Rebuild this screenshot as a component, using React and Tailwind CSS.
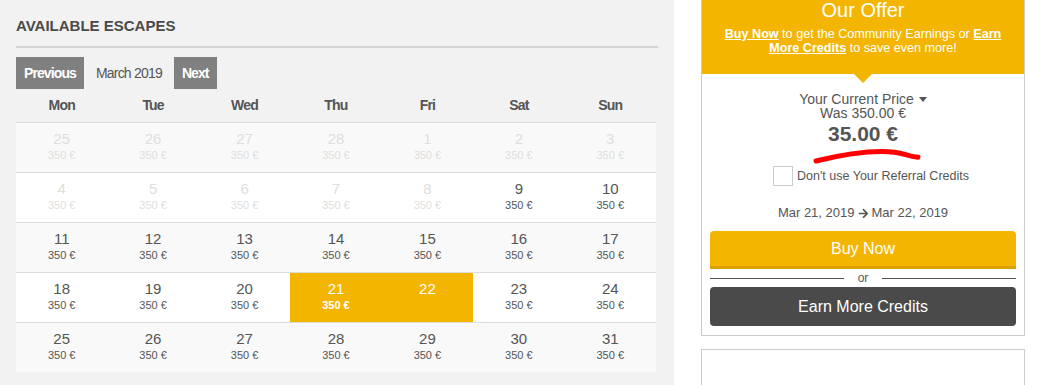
import { FaArrowRight } from 'react-icons/fa';

const weeks = [
  [[25, 'off'], [26, 'off'], [27, 'off'], [28, 'off'], [1, 'off'], [2, 'off'], [3, 'off']],
  [[4, 'off'], [5, 'off'], [6, 'off'], [7, 'off'], [8, 'off'], [9, 'on'], [10, 'on']],
  [[11, 'on'], [12, 'on'], [13, 'on'], [14, 'on'], [15, 'on'], [16, 'on'], [17, 'on']],
  [[18, 'on'], [19, 'on'], [20, 'on'], [21, 'sel'], [22, 'end'], [23, 'on'], [24, 'on']],
  [[25, 'on'], [26, 'on'], [27, 'on'], [28, 'on'], [29, 'on'], [30, 'on'], [31, 'on']],
];

const dayNames = ['Mon', 'Tue', 'Wed', 'Thu', 'Fri', 'Sat', 'Sun'];

function DayCell({ day, state }) {
  const selected = state === 'sel' || state === 'end';
  const color = state === 'off' ? 'text-[#dedede]' : selected ? 'text-white' : 'text-[#555]';
  return (
    <div className={`flex-1 text-center pt-[7px] pb-[10px] ${color} ${selected ? 'bg-[#f3b500]' : ''}`}>
      <div className="text-[15px] leading-[18px]">{day}</div>
      <div className={`text-[11px] leading-[14px] h-[14px] ${state === 'sel' ? 'font-bold' : ''}`}>
        {state === 'end' ? '' : '350 €'}
      </div>
    </div>
  );
}

function Calendar() {
  return (
    <div className="w-[674px] shrink-0 bg-[#f2f2f2] px-4 h-[385px]">
      <h2 className="pt-[17px] text-[15px] leading-[18px] font-bold uppercase text-[#4a4a4a]">
        Available Escapes
      </h2>
      <div className="mt-[11px] h-[2px] bg-[#d4d4d4]" />

      {/* month switcher */}
      <div className="mt-[9px] flex items-center">
        <button className="h-8 px-2 bg-[#808080] text-white font-bold text-[14px] tracking-[-0.9px]">
          Previous
        </button>
        <span className="mx-3 text-[14px] text-[#555] tracking-[-0.8px]">March 2019</span>
        <button className="h-8 px-2 bg-[#808080] text-white font-bold text-[14px] tracking-[-0.9px]">
          Next
        </button>
      </div>

      <div className="w-[640px]">
        <div className="flex pt-[6px] pb-[7px]">
          {dayNames.map((d) => (
            <div
              key={d}
              className="flex-1 text-center font-bold text-[14px] leading-5 text-[#555] tracking-[-0.8px]"
            >
              {d}
            </div>
          ))}
        </div>
        {weeks.map((week, i) => (
          <div
            key={i}
            className={`flex border-t border-[#dddddd] ${i % 2 === 0 ? 'bg-[#f9f9f9]' : 'bg-white'}`}
          >
            {week.map(([day, state]) => (
              <DayCell key={`${i}-${day}`} day={day} state={state} />
            ))}
          </div>
        ))}
      </div>
    </div>
  );
}

function OfferCard() {
  return (
    <div className="w-[324px] border-x border-b border-[#cccccc]">
      <div className="relative h-[74px] bg-[#f3b500] text-white text-center px-5">
        <div className="text-[20px] leading-[20px]">Our Offer</div>
        <p className="mt-2 text-[12.6px] leading-[13.5px]">
          <span className="font-bold underline">Buy Now</span> to get the Community Earnings or{' '}
          <span className="font-bold underline">Earn More Credits</span> to save even more!
        </p>
        <div className="absolute left-1/2 -translate-x-1/2 top-full w-0 h-0 border-x-[9px] border-x-transparent border-t-[9px] border-t-[#f3b500]" />
      </div>

      <div className="px-2 pb-[9px] text-[#555]">
        <div className="pt-[18px] text-center text-[14px] leading-[14px]">
          <div className="flex items-center justify-center">
            Your Current Price
            <span className="ml-[5px] inline-block w-0 h-0 border-x-[4px] border-x-transparent border-t-[5px] border-t-[#555]" />
          </div>
          <div>Was 350.00 €</div>
          <div className="mt-[2px] text-[21px] leading-[24px] font-bold">35.00 €</div>
        </div>

        <svg width="116" height="18" viewBox="0 0 116 18" className="block ml-[100px] mt-[1px]">
          <path
            d="M6 14 C 24 9.5, 50 4.5, 72 4.5 S 94 9, 108 10.3"
            fill="none"
            stroke="#ff0000"
            strokeWidth="5"
            strokeLinecap="round"
          />
        </svg>

        <div className="mt-[1px] pl-4 flex items-center justify-center gap-1">
          <span className="w-5 h-5 border border-[#cccccc] bg-white" />
          <span className="text-[12.5px]">Don't use Your Referral Credits</span>
        </div>

        <div className="mt-[19px] flex items-center justify-center text-[13px] leading-4">
          Mar 21, 2019
          <FaArrowRight className="mx-[3px] text-[#555]" size={11} />
          Mar 22, 2019
        </div>

        <button className="mt-[10px] w-full h-[38px] bg-[#f3b500] border-b-[3px] border-[#d9a000] rounded-t-sm text-white text-[16px]">
          Buy Now
        </button>

        <div className="flex items-center h-[18px] text-[12px] text-[#555]">
          <div className="flex-1 h-px bg-[#555]" />
          <span className="px-[14px] leading-none">or</span>
          <div className="flex-1 h-px bg-[#555]" />
        </div>

        <button className="w-full h-[39px] bg-[#4a4a4a] rounded-sm text-white text-[16px]">
          Earn More Credits
        </button>
      </div>
    </div>
  );
}

export default function App() {
  return (
    <div className="flex w-[1054px] h-[385px] overflow-hidden bg-white font-['Liberation_Sans',Arial,sans-serif]">
      <Calendar />
      <div className="pl-[27px]">
        <OfferCard />
        <div className="mt-[13px] w-[324px] h-[60px] border border-[#cccccc]" />
      </div>
    </div>
  );
}
